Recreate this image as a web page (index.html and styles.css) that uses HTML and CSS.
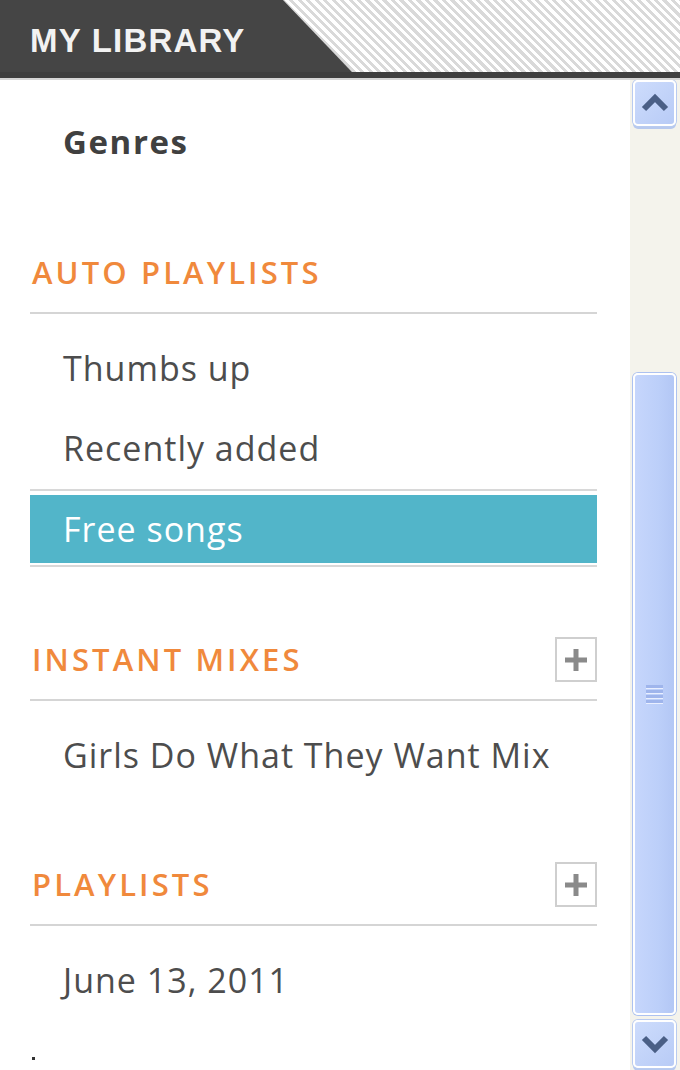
FILE: index.html
```html
<!DOCTYPE html>
<html>
<head>
<meta charset="utf-8">
<link rel="stylesheet" href="styles.css">
</head>
<body>
<div class="page">
  <header class="topbar">
    <div class="tab"><span class="tab-title">MY LIBRARY</span></div>
    <div class="stripes"></div>
  </header>
  <div class="main">
    <nav class="library">
      <div class="item item-bold">Genres</div>

      <section class="section">
        <div class="section-head"><span class="section-title">AUTO PLAYLISTS</span></div>
        <div class="list">
          <div class="item">Thumbs up</div>
          <div class="item">Recently added</div>
          <div class="item item-selected"><span class="sel-fill">Free songs</span></div>
        </div>
      </section>

      <section class="section section-wide">
        <div class="section-head">
          <span class="section-title">INSTANT MIXES</span>
          <span class="add-btn"><svg width="26" height="26" viewBox="0 0 26 26"><path d="M13 2v22M2 13h22" stroke="#8a8a8a" stroke-width="5"/></svg></span>
        </div>
        <div class="list">
          <div class="item">Girls Do What They Want Mix</div>
        </div>
      </section>

      <section class="section section-tight">
        <div class="section-head">
          <span class="section-title">PLAYLISTS</span>
          <span class="add-btn"><svg width="26" height="26" viewBox="0 0 26 26"><path d="M13 2v22M2 13h22" stroke="#8a8a8a" stroke-width="5"/></svg></span>
        </div>
        <div class="list">
          <div class="item">June 13, 2011</div>
        </div>
      </section>
      <div class="dot-row"><span class="dot"></span></div>
    </nav>

    <aside class="scrollbar">
      <div class="sb-btn">
        <svg width="30" height="22" viewBox="0 0 30 22"><path d="M4 17L15 6l11 11" fill="none" stroke="#4a5f86" stroke-width="6"/></svg>
      </div>
      <div class="sb-track"></div>
      <div class="sb-thumb">
        <div class="grip"><i></i><i></i><i></i><i></i></div>
      </div>
      <div class="sb-btn sb-btn-down">
        <svg width="30" height="22" viewBox="0 0 30 22"><path d="M4 5l11 11 11-11" fill="none" stroke="#4a5f86" stroke-width="6"/></svg>
      </div>
    </aside>
  </div>
</div>
</body>
</html>
```

FILE: styles.css
```css
* { box-sizing: border-box; }
html, body { margin: 0; padding: 0; background: #fff; }
body { font-family: "Open Sans", "Liberation Sans", Arial, sans-serif; }

.page {
  width: 680px;
  height: 1070px;
  overflow: hidden;
  display: flex;
  flex-direction: column;
}

.topbar {
  height: 78px;
  flex: none;
  display: flex;
  border-bottom: 6px solid #3f3f3f;
  box-shadow: 0 2px 0 #d6d6d6;
  background: repeating-linear-gradient(45deg, #ffffff 0 3px, #d9d9d9 3px 6px);
  position: relative;
  z-index: 1;
}
.tab {
  width: 352px;
  height: 72px;
  background: #454545;
  clip-path: polygon(0 0, 283px 0, 352px 100%, 0 100%);
  display: flex;
  align-items: center;
  padding-left: 30px;
  padding-top: 10px;
}
.tab-title {
  font-family: "Liberation Sans", Arial, sans-serif;
  font-weight: 700;
  font-size: 33px;
  color: #f2f2f2;
  letter-spacing: 1.2px;
}
.stripes { flex: 1; }

.main {
  flex: 1;
  display: flex;
  min-height: 0;
}

.library {
  width: 630px;
  padding: 24px 33px 0 30px;
}

.item {
  height: 80px;
  line-height: 80px;
  padding-left: 33px;
  font-size: 34px;
  color: #4d4d4d;
  letter-spacing: 1px;
  white-space: nowrap;
}
.item-bold { font-weight: 700; color: #404040; font-size: 33px; letter-spacing: 1.6px; }

.section { margin-top: 70px; }
.section-wide { margin-top: 72px; }
.section-tight { margin-top: 69px; }
.section-head {
  height: 62px;
  display: flex;
  align-items: flex-start;
  justify-content: space-between;
  border-bottom: 2px solid #d5d5d5;
}
.section-title {
  height: 40px;
  line-height: 40px;
  padding-left: 2px;
  font-size: 31px;
  font-weight: 600;
  color: #f0893c;
  letter-spacing: 3.1px;
}
.add-btn {
  width: 42px;
  height: 45px;
  margin-top: -2px;
  border: 2px solid #cfcfcf;
  display: flex;
  align-items: center;
  justify-content: center;
  background: #fff;
}
.list { padding-top: 14px; }

.item-selected {
  height: 78px;
  margin-top: 1px;
  padding: 4px 0 2px;
  border-top: 2px solid #d8d8d8;
  border-bottom: 2px solid #d8d8d8;
  line-height: normal;
}
.sel-fill {
  display: flex;
  align-items: center;
  height: 100%;
  padding-left: 33px;
  background: #52b5c9;
  color: #fff;
}

.dot-row { padding: 37px 0 0 2px; }
.dot { display: block; width: 3px; height: 3px; background: #333; }

.scrollbar {
  width: 50px;
  background: #f4f3ec;
  display: flex;
  flex-direction: column;
  padding: 2px 4px 2px 3px;
}
.sb-btn {
  height: 46px;
  flex: none;
  border-radius: 5px;
  border: 2px solid #ffffff;
  box-shadow: 0 0 0 1px #b9cbf0, 0 3px 0 #b7c9ee;
  background: linear-gradient(135deg, #cddcfc, #b8cbf6);
  display: flex;
  align-items: center;
  justify-content: center;
}
.sb-btn-down { height: 48px; margin-top: 5px; }
.sb-track { flex: none; height: 247px; }
.sb-thumb {
  flex: 1;
  border-radius: 5px;
  border: 2px solid #ffffff;
  box-shadow: 0 0 0 1px #adc2f0;
  background: linear-gradient(90deg, #c6d6fc, #bccff9 60%, #b3c7f5);
  display: flex;
  align-items: center;
  justify-content: center;
}
.grip {
  display: flex;
  flex-direction: column;
  gap: 2px;
}
.grip i {
  display: block;
  width: 17px;
  height: 3px;
  background: #9fb5ec;
  box-shadow: 0 1px 0 #e9efff;
}
```
